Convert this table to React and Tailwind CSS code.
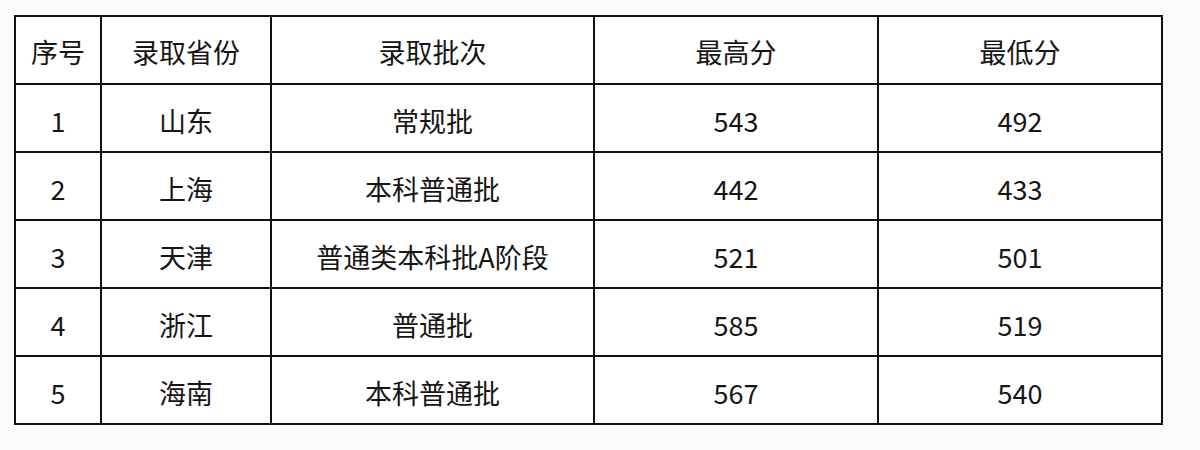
import React from "react";

const rows = [
  ["1", "山东", "常规批", "543", "492"],
  ["2", "上海", "本科普通批", "442", "433"],
  ["3", "天津", "普通类本科批A阶段", "521", "501"],
  ["4", "浙江", "普通批", "585", "519"],
  ["5", "海南", "本科普通批", "567", "540"],
];

const head = ["序号", "录取省份", "录取批次", "最高分", "最低分"];

export default function App() {
  return (
    <div
      className="w-[1200px] h-[450px] bg-[#fbfbfb] pt-[15px] pl-[14px]"
      style={{ fontFamily: '"Noto Sans CJK SC", "Noto Sans", sans-serif' }}
    >
      <table className="table-fixed border-collapse bg-white w-[1147px] text-[27px] text-[#161616]">
        <colgroup>
          <col className="w-[86px]" />
          <col className="w-[170px]" />
          <col className="w-[323px]" />
          <col className="w-[284px]" />
          <col className="w-[284px]" />
        </colgroup>
        <thead>
          <tr className="h-[68px]">
            {head.map((h) => (
              <td key={h} className="border-2 border-[#111] text-center align-middle p-0 pt-[2px] leading-none">
                {h}
              </td>
            ))}
          </tr>
        </thead>
        <tbody>
          {rows.map((r) => (
            <tr key={r[0]} className="h-[68px]">
              {r.map((c, i) => (
                <td key={i} className="border-2 border-[#111] text-center align-middle p-0 pt-[5px] leading-none">
                  {c}
                </td>
              ))}
            </tr>
          ))}
        </tbody>
      </table>
    </div>
  );
}
